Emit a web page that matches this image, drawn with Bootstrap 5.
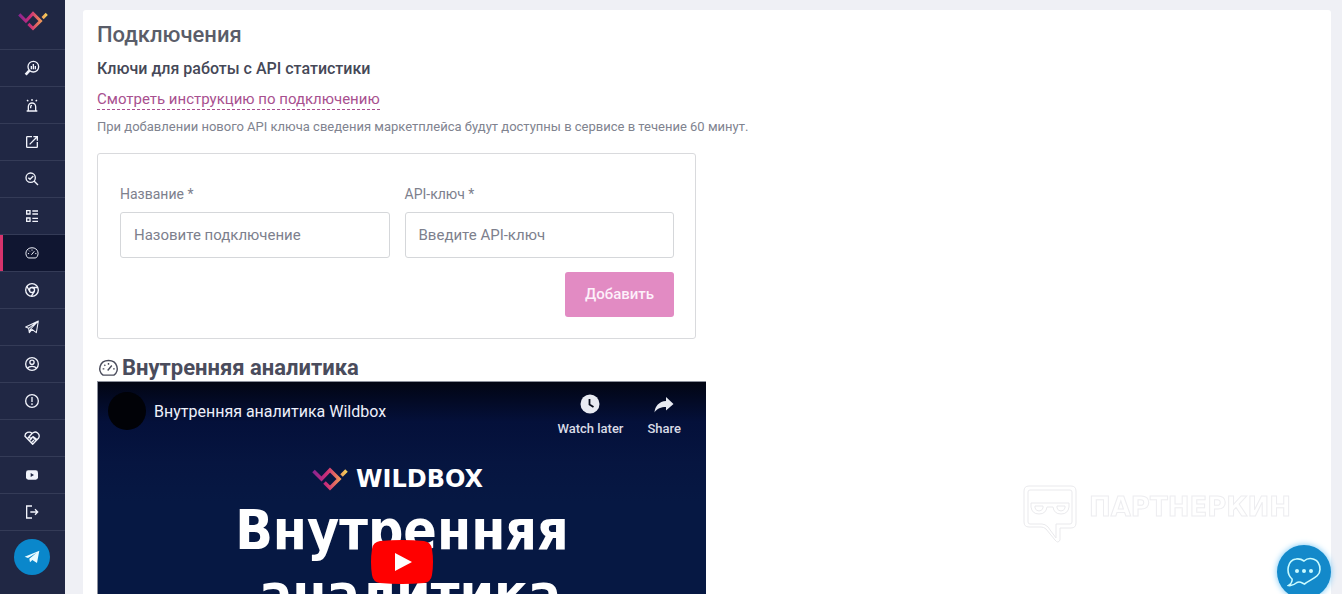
<!DOCTYPE html>
<html lang="ru">
<head>
<meta charset="utf-8">
<meta name="viewport" content="width=device-width, initial-scale=1">
<title>Подключения</title>
<link href="https://cdn.jsdelivr.net/npm/bootstrap@5.3.0/dist/css/bootstrap.min.css" rel="stylesheet">
<style>
body{font-family:Roboto,"Noto Sans",sans-serif;font-size:14px;line-height:20px;background:#eff0f5;color:#4a4c5c}
.side{width:65px;background:#202744}
.side .brand{height:49px;padding-bottom:8px}
.side .item{height:37px;border-top:1px solid #343b57;padding-right:1px;color:#f1f3fb}
.side .item.active{background:#101631;box-shadow:inset 3px 0 #d6336c}
.side .item svg{width:16px;height:16px}
.side .end{border-top:1px solid #343b57;padding-right:2px}
.ln{fill:none;stroke:currentColor;stroke-width:2}
.tg{width:36px;height:36px;background:#0a87cb;color:#e9fbff}
.content{scrollbar-width:none;padding:10px 11px 0 18px}
.panel{border-radius:3px;padding:11px 15px 24px 14px}
.page-title{font-size:22px;line-height:28px;font-weight:500;color:#5a5d69}
.sub-title{font-size:16px;line-height:24px;font-weight:500;color:#454857}
.guide{font-size:15px;line-height:20px;color:#a8508f;text-decoration:none;border-bottom:1px dashed #a8508f}
.note{font-size:13px;line-height:20px;color:#80838f;padding-top:7px}
.key-form{max-width:599px;border:1px solid #d9dadd;border-radius:3px;padding:30px 21px 21px 22px}
.key-form label{font-size:14px;line-height:20px;color:#7d808d;margin-bottom:8px}
.key-form .form-control{height:46px;font-size:15px;border-color:#d5d7da;border-radius:3px;padding:0 13px}
.key-form .form-control::placeholder{color:#7d808d}
.fields{gap:15px;margin-bottom:14px}
.btn-add{width:109px;height:45px;border-radius:3px;background:#e28bc3;color:#fdf0fa;font-size:15px;font-weight:500;padding:0}
.video-title{font-size:22px;line-height:26px;font-weight:700;color:#4a4c5c;gap:2px}
.video-title .ln{stroke-width:1}
.player{max-width:609px;height:360px;border-left:1px solid #8c909c;border-top:1px solid #8c909c;background:linear-gradient(#020513 0,#04103a 40px,#061540 80px,#061843 120px);color:#eef0fa}
.player .ch{width:38px;height:38px;background:#010207}
.player .top{padding:10px 25px 0 10px}
.player .name{font-size:16px;line-height:24px}
.player .act{font-size:13px;line-height:16px;font-weight:500;color:#d9dbe6;gap:7px}
.player .word{font-family:"DejaVu Sans",sans-serif;font-size:24px;line-height:24px;font-weight:700;color:#fff}
.player .poster{font-family:"DejaVu Sans Condensed","DejaVu Sans",sans-serif;font-stretch:condensed;font-size:55px;line-height:64px;font-weight:700;color:#fff;padding-top:7px}
.player .second{padding-left:16px}
.play{left:50%;top:50%;transform:translate(-50%,-50%)}
.logo-row{margin-top:30px;padding-right:9px;gap:8px}
.mark-brand{right:51px;bottom:51px;gap:12px}
.mark-brand span{font-family:"DejaVu Sans",sans-serif;font-size:26px;line-height:28px;font-weight:700;color:#fff;-webkit-text-stroke:1px #ededf0;padding-bottom:14px}
.chat{right:11px;bottom:-5px;width:54px;height:54px;background:#1389ca;color:#c9fbff;box-shadow:0 0 6px #6fc4f5}
</style>
</head>
<body>
<svg width="0" height="0" class="position-absolute" aria-hidden="true">
<defs>
<linearGradient id="wg" x1="0" x2="1"><stop offset="0" stop-color="#8b2590"/><stop offset=".4" stop-color="#cb2d78"/><stop offset=".7" stop-color="#e8785c"/><stop offset="1" stop-color="#f3cf58"/></linearGradient>
<symbol id="wb" viewBox="0 0 36 24"><path d="M1.500 4 9.500 12 18 3 27 12 18 21 12.500 15.500M29.500 8.500 34.500 3.500" fill="none" stroke="url(#wg)" stroke-width="3.600"/></symbol>
<symbol id="gauge" viewBox="0 0 24 24"><path d="M5.500 20.500C-1.500 15.500 1 3 12 3S25.500 15.500 18.500 20.500Z" fill="none" stroke="currentColor" stroke-width="1.700" stroke-linejoin="round"/><path fill="none" stroke="currentColor" stroke-width="1.700" d="M11 15 16 9M5 13h2M17.500 13h2M7 8l1.200 1.200M12 6v2"/></symbol>
</defs>
</svg>
<div class="d-flex vh-100 overflow-hidden">
<nav class="side d-flex flex-column flex-shrink-0" aria-label="Меню">
<a href="#" class="brand d-flex align-items-center justify-content-center" aria-label="Wildbox"><svg width="30" height="20"><use href="#wb"/></svg></a>
<a href="#" class="item d-flex align-items-center justify-content-center" aria-label="Поиск"><svg viewBox="0 0 24 24"><circle class="ln" cx="14" cy="10" r="8"/><path class="ln" d="M8 16 2.500 22" style="stroke-width:4"/><path class="ln" d="M11 9v5M14 6v8M17 9v5"/></svg></a>
<a href="#" class="item d-flex align-items-center justify-content-center" aria-label="Оповещения"><svg viewBox="0 0 24 24"><path class="ln" d="M4 21h16M6.500 21v-6.500a5.500 5.500 0 0 1 11 0V21M12 3v3M4.500 4.500l2 2M19.500 4.500l-2 2M10 17v-2.500a2 2 0 0 1 2-2"/></svg></a>
<a href="#" class="item d-flex align-items-center justify-content-center" aria-label="Открыть"><svg viewBox="0 0 24 24"><path fill="currentColor" d="M14 3v2h3.590L7.760 14.830l1.410 1.410L19 6.410V10h2V3M19 19H5V5h7V3H5a2 2 0 0 0-2 2v14a2 2 0 0 0 2 2h14a2 2 0 0 0 2-2v-7h-2z"/></svg></a>
<a href="#" class="item d-flex align-items-center justify-content-center" aria-label="Проверка"><svg viewBox="0 0 24 24"><circle class="ln" cx="10" cy="10" r="7"/><path class="ln" d="m15 15 6 6M6.500 10l2.500 2.500 5-5"/></svg></a>
<a href="#" class="item d-flex align-items-center justify-content-center" aria-label="Список"><svg viewBox="0 0 24 24"><path class="ln" d="M4 4h5v5H4zM4 15h5v5H4zM12.500 4.500H21M12.500 9H21M12.500 15.500H21M12.500 20H21"/></svg></a>
<a href="#" class="item active d-flex align-items-center justify-content-center" aria-label="Внутренняя аналитика"><svg style="width:14px"><use href="#gauge"/></svg></a>
<a href="#" class="item d-flex align-items-center justify-content-center" aria-label="Расширение"><svg viewBox="0 0 24 24"><circle class="ln" cx="12" cy="12" r="9.500"/><circle class="ln" cx="12" cy="12" r="3.800"/><path class="ln" d="M12 8.200h9M8.700 14 4 6M15.300 14 11 21.500"/></svg></a>
<a href="#" class="item d-flex align-items-center justify-content-center" aria-label="Рассылка"><svg viewBox="0 0 24 24"><path class="ln" style="stroke-width:1.600" stroke-linejoin="round" d="M2.500 12 21.500 3 18.500 20.500 12 15.500 8 20.500 7 14ZM7 14 21.500 3 10 15M8 20.500 10 15"/></svg></a>
<a href="#" class="item d-flex align-items-center justify-content-center" aria-label="Профиль"><svg viewBox="0 0 24 24"><circle class="ln" cx="12" cy="12" r="9.500"/><circle class="ln" cx="12" cy="9.500" r="3.200"/><path class="ln" d="M5 18.500c3-4 11-4 14 0"/></svg></a>
<a href="#" class="item d-flex align-items-center justify-content-center" aria-label="Важное"><svg viewBox="0 0 24 24"><circle class="ln" cx="12" cy="12" r="9.500"/><path class="ln" d="M12 6v7.500M12 15.500v2.500"/></svg></a>
<a href="#" class="item d-flex align-items-center justify-content-center" aria-label="Партнёрам"><svg viewBox="0 0 24 24"><path class="ln" stroke-linejoin="round" d="M12 5C8 1 1 4 1.500 9.500L13 21.500 22 12C25 6 18 0 12.500 5L7.500 10c1 3 4 2.500 6 0l7 5M5 13l4-4M8 16l4-4M11 19l4-4M13 10l5 6"/></svg></a>
<a href="#" class="item d-flex align-items-center justify-content-center" aria-label="Видео"><svg viewBox="0 0 24 24"><rect x="3" y="5" width="18" height="14" rx="3.500" fill="currentColor"/><path fill="#202744" d="M10 9v6l5-3z"/></svg></a>
<a href="#" class="item d-flex align-items-center justify-content-center" aria-label="Выход"><svg viewBox="0 0 24 24"><path class="ln" d="M12 3H4v18h8M9.500 12H20M16.500 8l4 4-4 4"/></svg></a>
<div class="end d-flex justify-content-center pt-2"><a href="#" class="tg rounded-circle d-flex align-items-center justify-content-center" aria-label="Telegram"><svg width="16" height="16" viewBox="0 0 24 24"><path fill="currentColor" d="M1 11.500 23 2.500 19.500 21 12.500 16.500 9 20 8 14.500 19 5.500 6 13.500Z"/></svg></a></div>
</nav>
<main class="content flex-grow-1 overflow-auto">
<section class="panel bg-white">
<h1 class="page-title mb-2">Подключения</h1>
<h2 class="sub-title mb-2">Ключи для работы с API статистики</h2>
<a href="#" class="guide d-table">Смотреть инструкцию по подключению</a>
<p class="note mb-3">При добавлении нового API ключа сведения маркетплейса будут доступны в сервисе в течение 60 минут.</p>
<form class="key-form">
<div class="fields d-flex">
<div class="flex-fill"><label for="conn-name" class="d-block">Название *</label><input id="conn-name" class="form-control" type="text" placeholder="Назовите подключение"></div>
<div class="flex-fill"><label for="conn-key" class="d-block">API-ключ *</label><input id="conn-key" class="form-control" type="text" placeholder="Введите API-ключ"></div>
</div>
<div class="d-flex justify-content-end"><button type="button" class="btn btn-add">Добавить</button></div>
</form>
<h2 class="video-title d-flex align-items-center mt-3 mb-0"><svg width="23" height="20" aria-hidden="true"><use href="#gauge"/></svg>Внутренняя аналитика</h2>
<div class="player position-relative overflow-hidden">
<div class="top d-flex align-items-start">
<span class="ch rounded-circle flex-shrink-0"></span>
<a href="#" class="name ms-2 mt-2 text-reset text-decoration-none">Внутренняя аналитика Wildbox</a>
<button type="button" class="act btn p-0 border-0 ms-auto d-flex flex-column align-items-center"><svg class="mt-1" width="20" height="18" viewBox="0 0 20 18" style="overflow:visible"><circle cx="10" cy="8" r="9.500" fill="#e8eaf2"/><path d="M9.500 3v5.500l4 2.500" fill="none" stroke="#030818" stroke-width="1.800"/></svg>Watch later</button>
<button type="button" class="act btn p-0 border-0 ms-4 d-flex flex-column align-items-center"><svg class="mt-1" width="20" height="18" viewBox="0 0 20 18"><path d="M12 1 19.500 8 12 14.500V11C7 11 3 12.500.500 16.500 1 10 5 5.500 12 5Z" fill="#e8eaf2"/></svg>Share</button>
</div>
<div class="logo-row d-flex justify-content-center align-items-center"><svg width="36" height="24" aria-hidden="true"><use href="#wb"/></svg><span class="word">WILDBOX</span></div>
<div class="poster text-center">Внутренняя<div class="second">аналитика</div></div>
<button type="button" class="play btn p-0 border-0 position-absolute" aria-label="Воспроизвести"><svg class="d-block" width="62" height="44" viewBox="0 0 62 44"><path fill="#f00" d="M9 1Q31-1 53 1 60 2 61 9 63 22 61 35 60 42 53 43 31 45 9 43 2 42 1 35-1 22 1 9 2 2 9 1Z"/><path fill="#fff" d="M24 13v18l17-9z"/></svg></button>
</div>
</section>
</main>
</div>
<div class="mark-brand position-fixed d-flex align-items-center" aria-hidden="true">
<svg width="54" height="58" viewBox="0 0 54 58" fill="none" stroke="#e9e9ec"><path d="M6 1h42q5 0 5 5v32q0 5-5 5H37v12q-2 4-5 0L23 44q-2-2-5-2H6q-5 0-5-5V6q0-5 5-5Z"/><path d="M7 5h40q2 0 2 2v30q0 2-2 2H33v14L25 42q-3-3-6-3H7q-2 0-2-2V7q0-2 2-2ZM8 18h38v4q-1 7-8 7t-8-7h-6q-1 7-8 7t-8-7ZM12 21h8v2q-1 3-4 3t-4-3ZM34 21h8v2q-1 3-4 3t-4-3Z"/></svg>
<span>ПАРТНЕРКИН</span>
</div>
<button type="button" class="chat btn p-0 border-0 rounded-circle position-fixed d-flex align-items-center justify-content-center" aria-label="Чат"><svg width="34" height="30" viewBox="0 0 34 30"><path d="M17 4C22-.5 33 1 33 12.500 33 20 24 22 17.500 27 15 26 13 24 10 25.500 7 28 4 29 1.500 28.500 4 27 5.500 24 5 22-2 15 1 3 9 2 12 1.500 15 2.500 17 4Z" fill="none" stroke="currentColor" stroke-width="1.600"/><g fill="currentColor"><circle cx="10" cy="14" r="2"/><circle cx="17" cy="14" r="2"/><circle cx="24" cy="14" r="2"/></g></svg></button>
<script src="https://cdn.jsdelivr.net/npm/bootstrap@5.3.0/dist/js/bootstrap.bundle.min.js"></script>
</body>
</html>
